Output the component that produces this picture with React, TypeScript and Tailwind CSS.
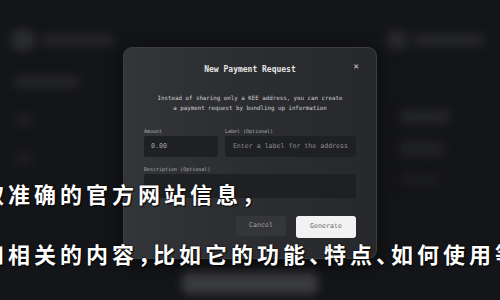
import React from "react";

const mono = { fontFamily: '"DejaVu Sans Mono", "Liberation Mono", monospace' };
const cjk = {
  fontFamily: '"Noto Sans CJK SC", "Noto Sans", sans-serif',
  fontFeatureSettings: '"halt"',
  textShadow: "0 0 2px rgba(0,0,0,0.9), 1px 1px 1px rgba(0,0,0,0.8)",
};

export default function App() {
  return (
    <div className="relative w-[500px] h-[300px] overflow-hidden bg-[#141518]">
      {/* blurred background page */}
      <div className="absolute inset-0 flex flex-col blur-[5px]">
        <div className="flex justify-between items-center px-[10px] pt-[28px] h-[52px]">
          <div className="flex items-center gap-[6px]">
            <div className="w-[26px] h-[22px] rounded-full bg-[#2a2b2e]" />
            <div className="w-[72px] h-[10px] rounded bg-[#27282b]" />
          </div>
          <div className="flex items-center gap-[6px] pr-[6px]">
            <div className="w-[22px] h-[20px] rounded-full bg-[#28292c]" />
            <div className="w-[70px] h-[12px] rounded bg-[#26272a]" />
          </div>
        </div>
        <div className="flex justify-between flex-1">
          <div className="flex flex-col gap-[26px] pl-[15px] pt-[24px]">
            <div className="w-[64px] h-[12px] rounded bg-[#242528]" />
            <div className="w-[18px] h-[12px] rounded bg-[#1e1f22]" />
            <div className="w-[18px] h-[12px] rounded bg-[#1e1f22]" />
          </div>
          <div className="flex flex-col gap-[18px] pr-[50px] pt-[58px]">
            <div className="w-[50px] h-[14px] rounded bg-[#232427]" />
            <div className="w-[44px] h-[14px] rounded bg-[#212225]" />
            <div className="w-[40px] h-[10px] rounded bg-[#1b1c1f]" />
          </div>
        </div>
        <div className="flex justify-center pb-[6px]">
          <div className="w-[136px] h-[22px] rounded-md bg-[#3b3c3f]" />
        </div>
      </div>

      {/* modal */}
      <div
        className="absolute left-[123px] top-[47px] w-[254px] h-[212px] rounded-[9px] border border-[#3d3e41] bg-gradient-to-r from-[#343538] via-[#2c2d30] to-[#27282b] shadow-[0_4px_20px_rgba(0,0,0,0.6)] flex flex-col px-[20px]"
        style={mono}
      >
        <div className="relative flex items-center justify-center h-[42px] pt-[2px]">
          <span className="text-[8px] text-[#e6e6e6] font-bold">New Payment Request</span>
          <span className="absolute right-[-3px] top-[14px] text-[9px] leading-none text-[#d0d0d0]">✕</span>
        </div>
        <div className="flex flex-col items-center text-[5.8px] leading-[10px] text-[#cfcfcf] pt-[3px]">
          <span>Instead of sharing only a KEE address, you can create</span>
          <span>a payment request by bundling up information</span>
        </div>
        <div className="flex gap-[7px] mt-[14px]">
          <div className="flex flex-col w-[75px]">
            <span className="text-[5px] leading-[8px] text-[#b0b0b0]">Amount</span>
            <div className="mt-[1px] h-[21px] rounded-[2px] bg-[#1f2023] flex items-center px-[7px] text-[6.6px] text-[#a8a8a8]">0.00</div>
          </div>
          <div className="flex flex-col flex-1">
            <span className="text-[5px] leading-[8px] text-[#b0b0b0]">Label (Optional)</span>
            <div className="mt-[1px] h-[21px] rounded-[2px] bg-[#1f2023] flex items-center px-[8px] text-[6.6px] text-[#8e8e8e] whitespace-nowrap">Enter a label for the address</div>
          </div>
        </div>
        <div className="flex flex-col mt-[8px]">
          <span className="text-[5px] leading-[8px] text-[#b0b0b0]">Description (Optional)</span>
          <div className="mt-[1px] h-[24px] rounded-[2px] bg-[#1f2023]" />
        </div>
        <div className="flex justify-end gap-[10px] mt-[18px]">
          <div className="w-[50px] h-[20px] rounded-[3px] bg-[#35363a] flex items-center justify-center text-[6.6px] text-[#a0a0a0]">Cancel</div>
          <div className="w-[60px] h-[22px] rounded-[3px] bg-[#f2f2f2] flex items-center justify-center text-[6.6px] text-[#666]">Generate</div>
        </div>
      </div>

      {/* overlay text */}
      <div
        className="absolute left-[-18px] top-[178px] whitespace-nowrap text-[22px] leading-[30px] font-bold text-white tracking-[4px]"
        style={cjk}
      >
        取准确的官方网站信息，
      </div>
      <div
        className="absolute left-[-18px] top-[238px] whitespace-nowrap text-[22px] leading-[30px] font-bold text-white tracking-[4px]"
        style={cjk}
      >
        和相关的内容，比如它的功能、特点、如何使用等
      </div>
    </div>
  );
}
